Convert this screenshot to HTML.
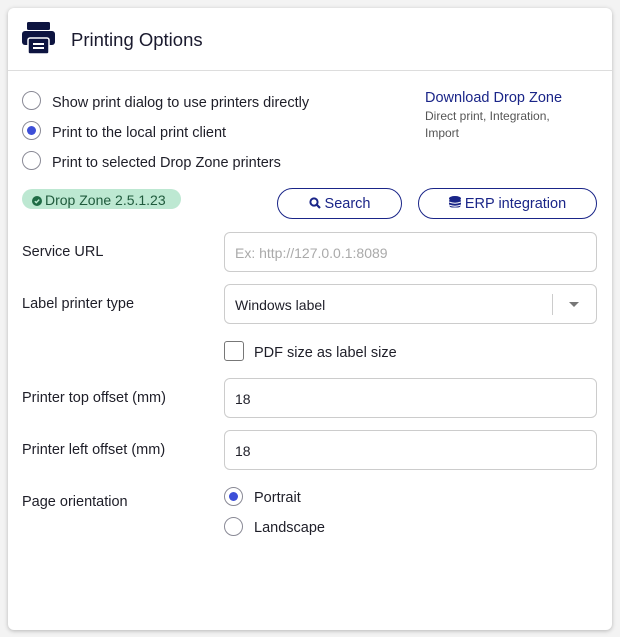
<!DOCTYPE html>
<html><head><style>
body{margin:0;width:620px;height:637px;background:#f3f3f3;font-family:"Liberation Sans",sans-serif;position:relative;overflow:hidden;color:#1e1e28}
.card{position:absolute;left:8px;top:8px;width:604px;height:622px;background:#fff;border-radius:6px;box-shadow:0 1px 4px rgba(0,0,0,.25)}
.a{position:absolute;white-space:nowrap}
.hr{position:absolute;left:8px;top:70px;width:604px;height:1px;background:#ddd}
.radio{position:absolute;width:17px;height:17px;border:1px solid #8a8a96;border-radius:50%;background:#fff}
.radio.on::after{content:"";position:absolute;left:4px;top:4px;width:9px;height:9px;border-radius:50%;background:#3d4fd8}
.t{font-size:14.5px;color:#1e1e28}
.inp{position:absolute;left:224px;width:371px;height:38px;border:1px solid #ccc;border-radius:6px;background:#fff}
.inp span{position:absolute;left:10px;top:12px;font-size:14px}
.btn{position:absolute;top:188px;height:29px;border:1.5px solid #1a2588;border-radius:16px;color:#1a2588;font-size:14.5px;text-align:center;line-height:31px}
</style></head><body>
<div class="card"></div>
<div class="hr"></div>
<svg class="a" style="left:22px;top:21px" width="33" height="33" viewBox="0 0 33 33">
<rect x="5" y="1" width="23" height="8" rx="1.5" fill="#0d1440"/>
<rect x="0" y="10" width="33" height="14" rx="3" fill="#0d1440"/>
<rect x="6" y="17" width="21" height="16" rx="2" fill="#0d1440" stroke="#fff" stroke-width="1.5"/>
<rect x="11" y="22" width="11" height="2" fill="#fff"/><rect x="11" y="26" width="11" height="2" fill="#fff"/>
</svg>
<div class="a" style="left:71px;top:29px;font-size:18.5px;color:#1a1a2e">Printing Options</div>
<div class="radio" style="left:22px;top:91px"></div><div class="a t" style="left:52px;top:95px">Show print dialog to use printers directly</div>
<div class="radio on" style="left:22px;top:121px"></div><div class="a t" style="left:52px;top:125px">Print to the local print client</div>
<div class="radio" style="left:22px;top:151px"></div><div class="a t" style="left:52px;top:155px">Print to selected Drop Zone printers</div>
<div class="a" style="left:425px;top:90px;font-size:14.5px;color:#1a2588">Download Drop Zone</div>
<div class="a" style="left:425px;top:108px;font-size:12px;color:#555;line-height:17px">Direct print, Integration,<br>Import</div>
<div class="a" style="left:22px;top:189px;width:159px;height:20px;border-radius:10px;background:#bde8d2;font-size:14px;color:#1f5a3c;line-height:22px">
<svg width="10" height="10" viewBox="0 0 10 10" style="margin:0 3px 0 10px;vertical-align:-1px"><circle cx="5" cy="5" r="5" fill="#1f6b45"/><path d="M2.8 5.2L4.3 6.6L7.2 3.6" stroke="#bde8d2" stroke-width="1.4" fill="none"/></svg>Drop Zone 2.5.1.23</div>
<div class="btn" style="left:277px;width:123px"><svg width="12" height="12" viewBox="0 0 12 12" style="vertical-align:-1px"><circle cx="5" cy="5" r="3.6" fill="none" stroke="#1a2588" stroke-width="2"/><path d="M7.5 7.5L11 11" stroke="#1a2588" stroke-width="2.2"/></svg> Search</div>
<div class="btn" style="left:418px;width:177px"><svg width="12" height="13" viewBox="0 0 12 13" style="vertical-align:-1px"><ellipse cx="6" cy="2.5" rx="6" ry="2.5" fill="#1a2588"/><rect x="0" y="2.5" width="12" height="9" rx="3" fill="#1a2588"/><path d="M0 6Q6 8.5 12 6M0 9Q6 11.5 12 9" stroke="#fff" fill="none"/></svg> ERP integration</div>
<div class="a t" style="left:22px;top:244px">Service URL</div>
<div class="inp" style="top:232px"><span style="color:#aaa">Ex: http://127.0.0.1:8089</span></div>
<div class="a t" style="left:22px;top:296px">Label printer type</div>
<div class="inp" style="top:284px"><span>Windows label</span><div class="a" style="left:327px;top:9px;width:1px;height:21px;background:#ccc"></div><div class="a" style="left:344px;top:17px;border-left:5px solid transparent;border-right:5px solid transparent;border-top:5px solid #777"></div></div>
<div class="a" style="left:224px;top:341px;width:18px;height:18px;border:1px solid #777;border-radius:3px"></div>
<div class="a t" style="left:254px;top:345px">PDF size as label size</div>
<div class="a t" style="left:22px;top:390px">Printer top offset (mm)</div>
<div class="inp" style="top:378px"><span>18</span></div>
<div class="a t" style="left:22px;top:442px">Printer left offset (mm)</div>
<div class="inp" style="top:430px"><span>18</span></div>
<div class="a t" style="left:22px;top:494px">Page orientation</div>
<div class="radio on" style="left:224px;top:487px"></div><div class="a t" style="left:254px;top:490px">Portrait</div>
<div class="radio" style="left:224px;top:517px"></div><div class="a t" style="left:254px;top:520px">Landscape</div>
</body></html>
